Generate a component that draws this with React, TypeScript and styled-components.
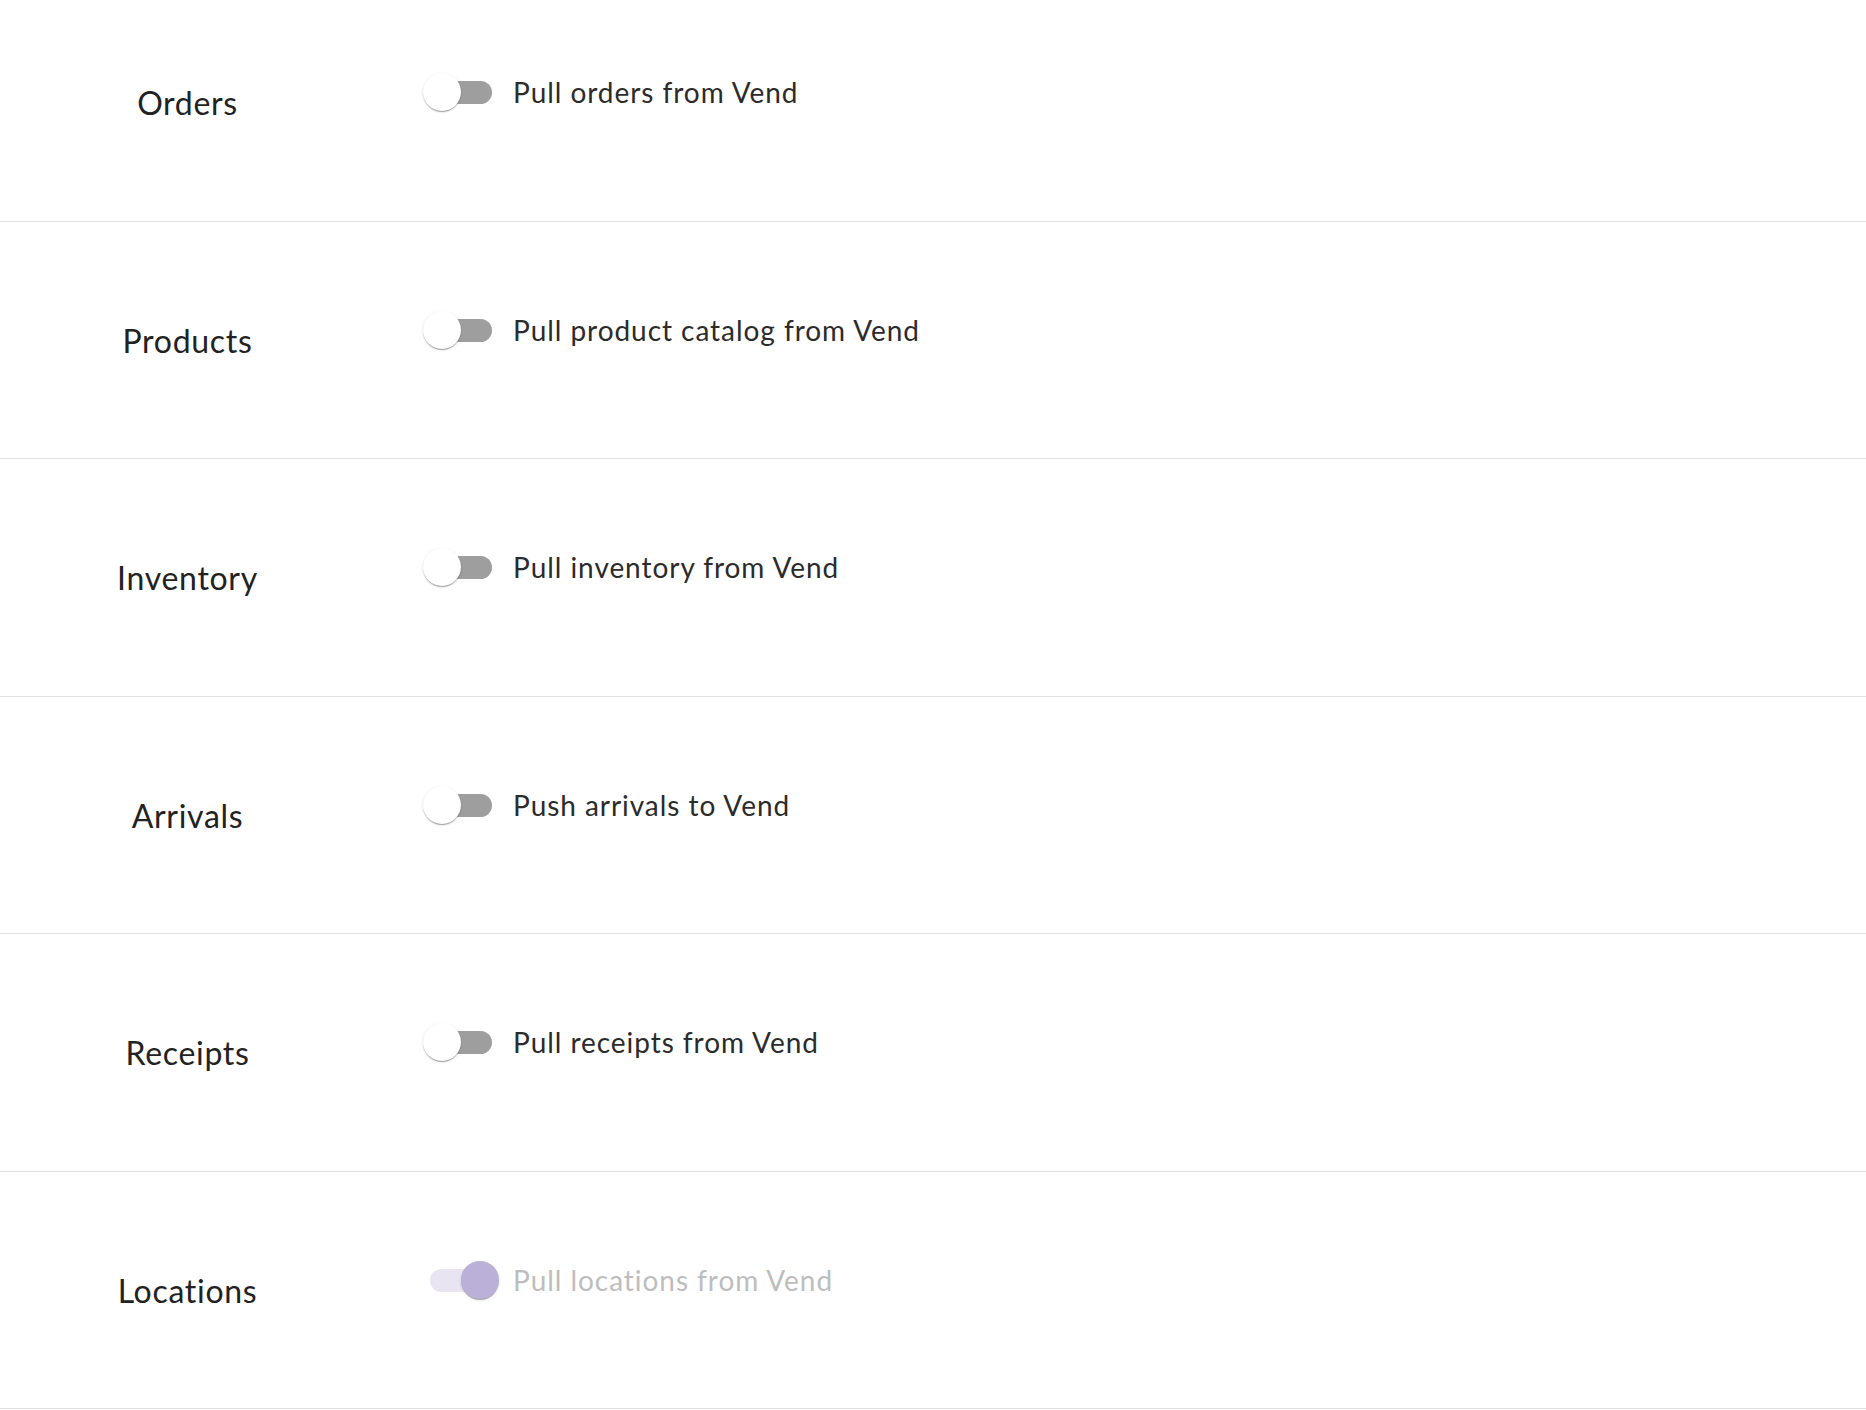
import React from "react"
import styled, { createGlobalStyle } from "styled-components"

const GlobalStyle = createGlobalStyle`
  html, body {
    margin: 0;
    padding: 0;
    background: #ffffff;
    font-family: "Lato", "Open Sans", sans-serif;
  }
`

type Setting = {
  label: string
  description: string
  checked: boolean
  disabled?: boolean
}

const settings: Setting[] = [
  { label: "Orders", description: "Pull orders from Vend", checked: false },
  { label: "Products", description: "Pull product catalog from Vend", checked: false },
  { label: "Inventory", description: "Pull inventory from Vend", checked: false },
  { label: "Arrivals", description: "Push arrivals to Vend", checked: false },
  { label: "Receipts", description: "Pull receipts from Vend", checked: false },
  { label: "Locations", description: "Pull locations from Vend", checked: true, disabled: true },
]

const Toggle: React.FC<{ checked: boolean; disabled?: boolean }> = ({ checked, disabled }) => {
  return <S.Switch role="switch" aria-checked={checked} aria-disabled={disabled}>
    <S.Track $checked={checked} $disabled={disabled} />
    <S.Thumb $checked={checked} $disabled={disabled} />
  </S.Switch>
}

export default function App() {
  return <>
    <GlobalStyle />
    <S.List>
      {
        settings.map(setting => {
          return <S.Row key={"__setting_" + setting.label}>
            <S.Label>{setting.label}</S.Label>
            <S.Control>
              <Toggle checked={setting.checked} disabled={setting.disabled} />
              <S.Description $disabled={setting.disabled}>{setting.description}</S.Description>
            </S.Control>
          </S.Row>
        })
      }
    </S.List>
  </>
}

const S = {
  List: styled.div`
    display: flex;
    flex-direction: column;
    width: 100%;
  `,
  Row: styled.div`
    display: flex;
    align-items: flex-start;
    box-sizing: border-box;
    height: 237.4px;
    padding-top: 89px;
    border-bottom: 1px solid #e0e0e0;
    &:first-child {
      height: 222px;
      padding-top: 73px;
    }
  `,
  Label: styled.div`
    width: 375px;
    flex-shrink: 0;
    margin-top: 10px;
    text-align: center;
    font-size: 32px;
    line-height: 40px;
    letter-spacing: 0.7px;
    color: #222222;
  `,
  Control: styled.div`
    display: flex;
    align-items: center;
    gap: 14px;
    margin-left: 48px;
    height: 38px;
  `,
  Switch: styled.span`
    position: relative;
    display: inline-block;
    width: 76px;
    height: 38px;
    flex-shrink: 0;
  `,
  Track: styled.span<{ $checked: boolean; $disabled?: boolean }>`
    position: absolute;
    left: 7px;
    top: 8px;
    width: 62px;
    height: 23px;
    border-radius: 12px;
    background-color: ${p => p.$checked ? (p.$disabled ? "#e8e4f2" : "#7e57c2") : "#9e9e9e"};
  `,
  Thumb: styled.span<{ $checked: boolean; $disabled?: boolean }>`
    position: absolute;
    top: 0;
    left: ${p => p.$checked ? "38px" : "0"};
    width: 38px;
    height: 38px;
    border-radius: 50%;
    background-color: ${p => p.$checked ? (p.$disabled ? "#bab0d8" : "#673ab7") : "#ffffff"};
    box-shadow: 0px 2px 1px -1px rgba(0, 0, 0, 0.2), 0px 1px 1px 0px rgba(0, 0, 0, 0.14), 0px 1px 3px 0px rgba(0, 0, 0, 0.12);
  `,
  Description: styled.span<{ $disabled?: boolean }>`
    font-size: 28px;
    line-height: 36px;
    letter-spacing: 0.95px;
    color: ${p => p.$disabled ? "#bdbdbd" : "#2b2b2b"};
    white-space: nowrap;
  `,
}
